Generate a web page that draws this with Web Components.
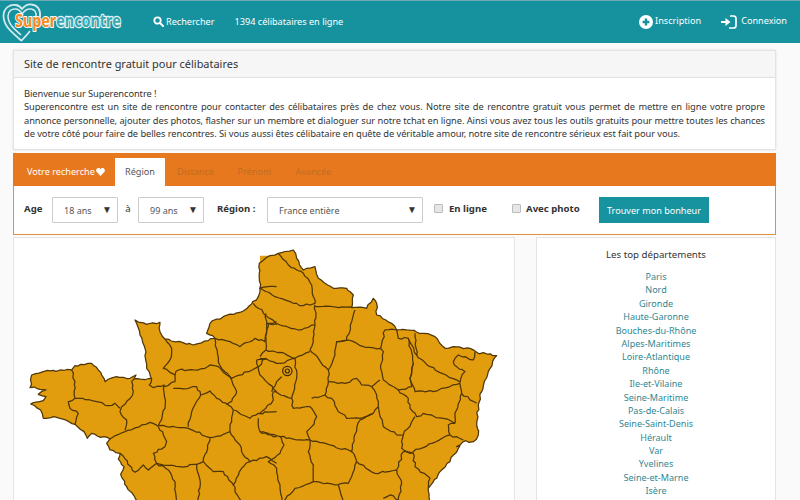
<!DOCTYPE html>
<html><head><meta charset="utf-8"><title>Superencontre</title>
<style>
html,body{margin:0;padding:0;height:500px;overflow:hidden;background:#fafafa;font-family:"Noto Sans",sans-serif;color:#333}
body{display:flex;flex-direction:column}
</style></head><body>
<site-header></site-header>
<main-area>
  <intro-panel heading="Site de rencontre gratuit pour célibataires">
    Bienvenue sur Superencontre !<br>
    Superencontre est un site de rencontre pour contacter des célibataires près de chez vous. Notre site de rencontre gratuit vous permet de mettre en ligne votre propre annonce personnelle, ajouter des photos, flasher sur un membre et dialoguer sur notre tchat en ligne. Ainsi vous avez tous les outils gratuits pour mettre toutes les chances de votre côté pour faire de belles rencontres. Si vous aussi êtes célibataire en quête de véritable amour, notre site de rencontre sérieux est fait pour vous.
  </intro-panel>
  <search-panel></search-panel>
  <two-cols>
    <france-map></france-map>
    <top-list></top-list>
  </two-cols>
</main-area>
<script>
function def(name, css, html){
  customElements.define(name, class extends HTMLElement{
    constructor(){super();const r=this.attachShadow({mode:'open'});
      r.innerHTML='<style>'+css+'</style>'+html;}
    connectedCallback(){ const h=this.shadowRoot.querySelector('[data-h]'); if(h) h.textContent=this.getAttribute('heading')||''; }
  });
}
const F='font-family:"Noto Sans",sans-serif;';
def('site-header',`
:host{display:flex;flex:none;height:43px;box-sizing:border-box;background:#16929f;border-top:1px solid #6fa9b8;align-items:center;color:#fff;${F}font-size:9.15px}
.logo{flex:none;width:145px;height:42px}
.logo text{font-family:"Noto Sans",sans-serif;font-weight:700;font-size:18px;paint-order:stroke;stroke-linejoin:round}
.item{display:flex;align-items:center;gap:2px}
.s{margin-left:8px;margin-top:-2px}
.o{margin-left:20px;margin-top:-2px}
.sp{flex:1}
.r1{margin-right:20px;margin-top:-1px}
.r2{margin-right:13px;margin-top:-1px;gap:4px}
.r1 span,.r2 span{position:relative;top:-1px}
`,`
<svg class="logo" viewBox="0 0 145 42"><path d="M21 39.500C12 31 4 26 3.500 15C3.500 7 10 3 16 4C19 4.500 21 6.500 22 8C24 5.500 27 3 31.500 3.500C37.500 4 41 9 40 16" fill="none" stroke="#d3e9ec" stroke-width="1.800"/><path d="M21 34C14 28 8 23 8 15C8 10 12 7.500 16 8C19 8.500 21 11 22 13C24 10 27 7.500 31 8C35 8.500 36.500 12 36 16" fill="none" stroke="#d3e9ec" stroke-width="1.600"/><path d="M21 40C24 37 27 34 30 30" fill="none" stroke="#d3e9ec" stroke-width="1.800"/>
<g transform="translate(15 26) scale(.797 1)"><text x="0" y="0"><tspan fill="#f38b26" stroke="#fff" stroke-width="2">Super</tspan><tspan fill="#3aa9b4" stroke="#e8f5f6" stroke-width="2.400">encontre</tspan></text></g></svg>
<div class="item s"><svg width="11" height="11" viewBox="0 0 11 11"><circle cx="4.500" cy="4.500" r="3.200" fill="none" stroke="#fff" stroke-width="1.800"/><path d="M7 7l3 3" stroke="#fff" stroke-width="2" stroke-linecap="round"/></svg><span>Rechercher</span></div>
<div class="item o"><span>1394 célibataires en ligne</span></div>
<div class="sp"></div>
<div class="item r1"><svg width="14" height="14" viewBox="0 0 14 14"><circle cx="7" cy="7" r="7" fill="#fff"/><path d="M3.600 7h6.800M7 3.600v6.800" stroke="#16929f" stroke-width="2.400"/></svg><span>Inscription</span></div>
<div class="item r2"><svg width="16" height="14" viewBox="0 0 16 14"><path d="M9 1h3.500q2.500 0 2.500 2.500v7q0 2.500-2.500 2.500H8" fill="none" stroke="#fff" stroke-width="1.700"/><path d="M0 6h4.500V3l5 4-5 4V8H0z" fill="#fff"/></svg><span>Connexion</span></div>
`);
def('main-area',`:host{display:flex;flex-direction:column;flex:none;padding:7px 24px 0 13px;height:600px;box-sizing:border-box}`,`<slot></slot>`);
def('intro-panel',`
:host{display:block;flex:none;height:100px;box-sizing:border-box;background:#fff;border:1px solid #e4e4e4;box-shadow:0 0 2px #ddd;${F}color:#333}
h2{margin:0;height:27px;box-sizing:border-box;background:#f6f6f6;border-bottom:1px solid #e0e0e0;font-weight:400;font-size:10.95px;line-height:26px;padding-left:10px;color:#333}
.b{padding:9px 10px 0;font-size:9.3px;letter-spacing:-.07px;line-height:13.4px;text-align:justify}
`,`<h2 data-h></h2><div class="b"><slot></slot></div>`);
def('search-panel',`
:host{display:block;flex:none;height:82px;margin-top:3px;box-sizing:border-box;background:#fff;border:1px solid #e0913f;border-top:none;${F}color:#333;font-size:9.15px}
.tabs{height:33px;background:#e8781e;box-sizing:border-box;display:flex;align-items:flex-end;color:#fff;margin:0 -1px}
.lab{width:102px;flex:none;height:28px;display:flex;align-items:center;padding-left:14px;box-sizing:border-box;gap:1px;padding-bottom:1px}
.tab{height:28px;display:flex;align-items:center;box-sizing:border-box;color:#c06c22;width:59px;justify-content:center;padding-bottom:1px}
.tab.on{background:#fff;color:#555;width:50px;margin-right:1px}
.f{display:flex;align-items:center;height:48px;padding-left:10px;font-weight:700;font-size:9.6px}
.sel{height:26px;box-sizing:border-box;background:#fff;border:1px solid #ccc;border-radius:1px;display:flex;align-items:center;font-weight:400;font-size:9px;color:#555;padding:0 5px 0 11px;justify-content:space-between}
.sel b{font-size:10px;color:#333;margin-top:-2px;font-weight:400}
.c{width:9px;height:9px;box-sizing:border-box;border:1px solid #bbb;background:#e6e6e6;border-radius:1px;flex:none}
.btn{width:110px;height:26px;background:#17929f;color:#fff;font-weight:400;font-size:9.1px;display:flex;align-items:center;justify-content:center}
span.l{margin-top:-3px;white-space:nowrap}
`,`
<div class="tabs"><div class="lab">Votre recherche<svg width="9" height="8" viewBox="0 0 9 8" style="flex:none"><path d="M4.500 8L.5 3.700C-.6 2 .8 0 2.400 0 3.400 0 4.100.6 4.500 1.200 4.900.6 5.600 0 6.600 0 8.200 0 9.600 2 8.500 3.700z" fill="#fff"/></svg></div><div class="tab on">Région</div><div class="tab">Distance</div><div class="tab">Prénom</div><div class="tab">Avancée</div></div>
<div class="f"><span class="l" style="width:28px">Age</span><div class="sel" style="width:66px">18 ans<b>▼</b></div><span class="l" style="width:20px;text-align:center;font-weight:400">à</span><div class="sel" style="width:66px">99 ans<b>▼</b></div><span class="l" style="margin-left:13px;width:50px">Région :</span><div class="sel" style="width:156px">France entière<b>▼</b></div><div class="c" style="margin-left:11px;margin-top:-4px"></div><span class="l" style="margin-left:6px;width:63px">En ligne</span><div class="c" style="margin-top:-4px"></div><span class="l" style="margin-left:5px;width:73px">Avec photo</span><div class="btn">Trouver mon bonheur</div></div>
`);
def('two-cols',`:host{display:flex;flex:none;gap:21px;margin-top:2px;height:400px}`,`<slot></slot>`);
/* hand-traced border lines, with a small repeatable wobble like the real department borders */
function wob(s){
  const p=s.split(' ').map(q=>q.split(',').map(Number));const o=[];let seed=p[0][0]*7+p[0][1]*13+1;
  const rnd=()=>{seed=(seed*9301+49297)%233280;return seed/233280-.5};
  for(let i=0;i<p.length-1;i++){
    const [a,b]=p[i],[c,d]=p[i+1];const L=Math.hypot(c-a,d-b),n=Math.max(1,Math.round(L/11));
    o.push(a+','+b);
    for(let k=1;k<n;k++){const t=k/n,A=6*rnd(),B=6*rnd();o.push((a+(c-a)*t+A).toFixed(1)+','+(b+(d-b)*t+B).toFixed(1));}
  }
  o.push(p[p.length-1].join(','));return o.join(' ');
}
function pts(list){return list.map(l=>'<polyline points="'+l+'"/>').join('')}
const coastA=wob("385,800 350,755 332,718 342,695 325,672 330,655 300,645 290,625 300,612 262,603 245,595 232,610 222,590 195,568 150,550 130,545 100,550 92,525 62,507 100,497 108,485 85,478 108,465 80,460 60,458 65,420 100,410 150,405 185,405 195,392 245,385 265,405 285,440 320,425 360,430 378,420 372,432 425,432 410,400 405,340 390,300 375,255 410,268 450,262 450,290 465,312 550,330 615,310 590,295 600,265 640,245 700,228 745,185 750,160 748,85 780,62");
const innerA=[
"185,405 195,440 195,490 175,500 180,520 205,535 195,568",
"195,490 240,495 295,512 315,505 330,520",
"372,432 365,440 368,480 335,515 330,530 350,555 345,585",
"300,612 345,590 395,570 420,562 445,575",
"425,432 418,450 430,458 462,450 465,520 445,572",
"465,312 485,340 480,375 460,400 495,420 495,440 462,455",
"495,420 505,405 550,405 585,400 600,390 625,395 665,435 680,470 665,500 650,510",
"490,460 520,462 560,455 572,480 545,530 535,575",
"572,480 600,468 620,490 650,505 670,525",
"615,310 625,380 630,392",
"615,310 660,320 690,335 735,310 765,320 775,265 800,260",
"630,392 665,430 735,400 768,370 740,375",
"445,572 535,580 600,608 640,598 660,590 670,525",
"445,575 470,620 465,635 430,655 440,685 510,695 560,688 580,680 600,610",
"330,655 375,712 400,690 415,705 440,685",
"440,685 475,705 495,740 500,800",
"560,688 570,735 565,800",
"580,680 610,710 640,710 670,750 695,700 720,680",
"670,750 675,770 695,800",
"660,590 690,630 700,660 720,680 770,665 800,685",
"670,525 720,550 745,535 800,530",
"745,550 750,590 800,605",
"740,375 750,420 800,470",
"748,160 800,155",
"730,205 800,268"
].map(wob);
const coastB=wob("30,62 55,55 100,45 110,70 130,105 165,95 175,130 220,160 260,160 280,180 275,218 320,220 340,190 350,205 350,240 395,265 410,285 440,285 490,295 525,305 555,340 580,335 630,340 650,352 710,362 685,410 665,470 655,510 650,570 655,600 640,620 610,620 590,635 600,632 570,680 540,710 505,760 510,800");
const innerB=[
"0,158 45,185 90,200 130,212 165,205 155,150 130,115 85,90 55,55",
"165,215 280,218",
"165,210 165,270 160,320 150,345 175,370 205,405 205,440 195,480",
"18,265 60,270 115,285 165,270",
"285,225 275,260 260,315 230,320 225,360 205,405",
"18,235 18,345 0,365",
"18,345 60,352 105,370 150,350",
"0,370 60,385 105,370 110,430 95,490 100,520 150,515 170,545 155,575 140,590 150,615",
"65,425 50,440 35,470",
"40,470 40,495 0,535",
"40,470 95,490",
"0,590 60,605 110,615 150,615 210,630 275,650 290,580 300,555 340,535",
"60,605 72,630 60,655 25,680 50,700 60,750 65,800",
"150,615 145,650 160,690 160,740 105,760 70,800",
"160,740 225,750 265,745 290,680",
"155,490 195,480 215,490 230,520 260,550 300,550 340,535 355,515 350,480 335,455 360,435",
"205,440 255,445 290,430 305,450 335,455",
"230,320 265,315 310,335 362,340 370,350 362,400 370,435 415,465 455,455 450,430 460,385 445,310 415,310 410,285",
"362,340 375,285 410,285",
"445,310 470,360 465,295",
"470,360 510,395 600,442 615,410 590,395 580,380 595,360 640,375 645,350",
"460,385 450,430 465,470 520,470 545,460 600,445",
"600,445 605,475 650,505",
"605,475 585,545 585,565",
"415,465 445,490 450,520 470,545 490,535 550,550 585,565",
"355,515 370,575 410,600 430,600 465,545",
"430,600 425,640 450,655 515,625 570,600 565,570 585,565",
"570,600 610,615",
"275,650 290,680 345,715 410,705 430,650",
"430,650 460,655 465,695 510,730 505,760",
"410,705 425,745 415,800",
"235,750 250,800",
"370,790 390,780 415,795"
].map(wob);
def('france-map',`
:host{display:block;flex:none;width:502px;height:400px;box-sizing:border-box;background:#fff;border:1px solid #e4e4e4;position:relative;overflow:hidden}
svg{position:absolute;left:-1px;top:-1px}
polyline{fill:none;stroke:#4f3606;stroke-width:1.25;vector-effect:non-scaling-stroke;stroke-linejoin:round}
polygon{fill:#e29d0e;stroke:none}
`,`<svg width="520" height="300" viewBox="13 237 520 300">
<g transform="translate(10 235) scale(.3333)"><polygon points="${coastA} 800,62 800,800"/></g>
<g transform="translate(260 235) scale(.3333)"><polygon points="${coastB} 0,800 0,62"/></g>
<g transform="translate(10 235) scale(.3333)">${pts([coastA,...innerA])}</g>
<g transform="translate(260 235) scale(.3333)">${pts([coastB,...innerB])}
<circle cx="82" cy="408" r="14" fill="none" stroke="#3d2a05" stroke-width="1.200" vector-effect="non-scaling-stroke"/><circle cx="82" cy="408" r="6" fill="none" stroke="#3d2a05" stroke-width="1.200" vector-effect="non-scaling-stroke"/></g>
</svg>`);
const deps=["Paris","Nord","Gironde","Haute-Garonne","Bouches-du-Rhône","Alpes-Maritimes","Loire-Atlantique","Rhône","Ile-et-Vilaine","Seine-Maritime","Pas-de-Calais","Seine-Saint-Denis","Hérault","Var","Yvelines","Seine-et-Marne","Isère"];
def('top-list',`
:host{display:block;flex:none;width:240px;height:400px;box-sizing:border-box;background:#fff;border:1px solid #e4e4e4;text-align:center;${F}font-size:9.05px}
h3{margin:0;font-weight:400;font-size:9.7px;color:#333;padding-top:9px;line-height:15px;margin-bottom:8px}
ul{list-style:none;margin:0;padding:0;color:#2f8792}
li{height:13.4px;line-height:13.4px}
`,`<h3>Les top départements</h3><ul>${deps.map(d=>'<li>'+d+'</li>').join('')}</ul>`);
</script>
</body></html>
